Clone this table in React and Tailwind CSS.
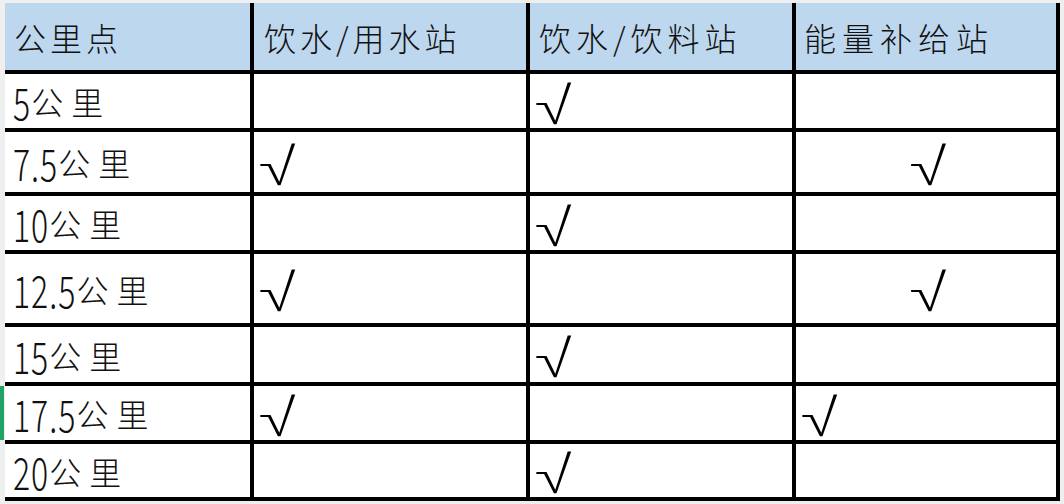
import React from "react";

const rows = [
  { h: "h-[54px]", num: "5", c: [0, 1, 0] },
  { h: "h-[60px]", num: "7.5", c: [1, 0, 2] },
  { h: "h-[54px]", num: "10", c: [0, 1, 0] },
  { h: "h-[69px]", num: "12.5", c: [1, 0, 2] },
  { h: "h-[55px]", num: "15", c: [0, 1, 0] },
  { h: "h-[54px]", num: "17.5", c: [1, 0, 1], sel: true },
  { h: "h-[53px]", num: "20", c: [0, 1, 0] },
];

const dataCols = ["w-[276px]", "w-[266px]", "w-[264px]"];

function Check({ mode }) {
  if (!mode) return null;
  return (
    <div className={"flex w-full " + (mode === 2 ? "justify-center pl-[4px]" : "")}>
      <span
        className={
          "inline-block font-['Noto_Serif_CJK_SC',serif] text-[41px] leading-none text-black scale-x-[1.5] " +
          (mode === 2 ? "origin-center" : "origin-left -ml-[7px]")
        }
      >
        √
      </span>
    </div>
  );
}

export default function App() {
  return (
    <div className="w-[1064px] h-[504px] bg-[#efefef] pt-[3px] pl-[5px] overflow-hidden font-['Noto_Sans_CJK_SC',sans-serif] text-[#111]">
      <div className="flex flex-col w-[1055px] bg-white">
        <div className="flex h-[71px] bg-[#bdd7ee] border-b-4 border-black text-[32px] font-light tracking-[4px]">
          <div className="w-[249px] shrink-0 border-r-4 border-black pl-[9px] flex items-center">公里点</div>
          <div className="w-[276px] shrink-0 border-r-4 border-black pl-[10px] flex items-center">饮水/用水站</div>
          <div className="w-[266px] shrink-0 border-r-4 border-black pl-[9px] flex items-center tracking-[5px]">饮水/饮料站</div>
          <div className="w-[264px] shrink-0 border-r-4 border-black pl-[8px] flex items-center tracking-[6px]">能量补给站</div>
        </div>
        {rows.map((r) => (
          <div key={r.num} className={"flex border-b-4 border-black box-content " + r.h}>
            <div className="w-[249px] shrink-0 border-r-4 border-black pl-[8px] flex items-center text-[32px] font-light relative">
              {r.sel && (
                <span className="absolute left-[-5px] top-0 bottom-0 w-[4px] bg-[#21a366]" />
              )}
              <span className="inline-block scale-y-[1.35] tracking-[1px]">{r.num}</span>
              <span className="tracking-[8px]">公里</span>
            </div>
            {dataCols.map((cls, ci) => (
              <div key={ci} className={cls + " shrink-0 border-r-4 border-black flex items-center"}>
                <Check mode={r.c[ci]} />
              </div>
            ))}
          </div>
        ))}
      </div>
    </div>
  );
}
